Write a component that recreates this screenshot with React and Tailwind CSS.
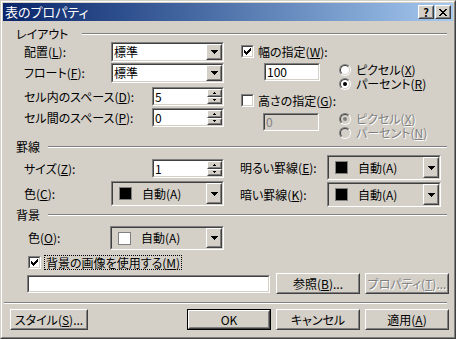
const FONT = "font-['Noto_Sans_CJK_JP','Noto_Sans',sans-serif] [font-feature-settings:'palt']";

function U({ children }) {
  return <span className="underline underline-offset-1">{children}</span>;
}

function Sunken({ className = "", innerClass = "", children }) {
  return (
    <div className={`border border-t-[#808080] border-l-[#808080] border-b-white border-r-white ${className}`}>
      <div className={`h-full w-full border border-t-[#404040] border-l-[#404040] border-b-[#d4d0c8] border-r-[#d4d0c8] ${innerClass}`}>
        {children}
      </div>
    </div>
  );
}

function Raised({ className = "", innerClass = "", children }) {
  return (
    <div className={`border border-t-white border-l-white border-b-[#404040] border-r-[#404040] ${className}`}>
      <div className={`h-full w-full border border-t-[#d4d0c8] border-l-[#d4d0c8] border-b-[#808080] border-r-[#808080] ${innerClass}`}>
        {children}
      </div>
    </div>
  );
}

function DownArrow() {
  return (
    <svg width="7" height="4" viewBox="0 0 7 4" shapeRendering="crispEdges">
      <path d="M0 0h7v1H0zM1 1h5v1H1zM2 2h3v1H2zM3 3h1v1H3z" fill="#000" />
    </svg>
  );
}

function Combo({ className = "", fieldClass = "bg-white", children }) {
  return (
    <Sunken className={className} innerClass={`flex ${fieldClass}`}>
      <div className="flex min-w-0 flex-1 items-center">{children}</div>
      <Raised className="h-full w-[16px] bg-[#d4d0c8]" innerClass="flex items-center justify-center">
        <DownArrow />
      </Raised>
    </Sunken>
  );
}

function Spin({ value }) {
  return (
    <Sunken className="h-[19px] w-[72px]" innerClass="flex bg-white">
      <div className="flex flex-1 items-center pl-[1px] leading-none">{value}</div>
      <div className="flex w-[15px] flex-col">
        {[0, 1].map((i) => (
          <Raised key={i} className="flex-1 bg-[#d4d0c8]" innerClass="flex items-center justify-center">
            <svg width="3" height="2" viewBox="0 0 3 2" shapeRendering="crispEdges">
              <path d={i === 0 ? "M1 0h1v1h1v1H0V1h1z" : "M0 0h3v1H2v1H1V1H0z"} fill="#000" />
            </svg>
          </Raised>
        ))}
      </div>
    </Sunken>
  );
}

function Check({ checked }) {
  return (
    <Sunken className="h-[13px] w-[13px] shrink-0" innerClass="flex items-center justify-center bg-white">
      {checked && (
        <svg width="7" height="7" viewBox="0 0 7 7" shapeRendering="crispEdges">
          <path
            d="M0 2h1v3H0zM1 3h1v3H1zM2 4h1v3H2zM3 3h1v3H3zM4 2h1v3H4zM5 1h1v3H5zM6 0h1v3H6z"
            fill="#000"
          />
        </svg>
      )}
    </Sunken>
  );
}

function Radio({ checked, disabled, children }) {
  return (
    <div className="flex h-[13px] items-center leading-[13px]">
      <div className="h-[12px] w-[12px] shrink-0 rounded-full border border-t-[#808080] border-l-[#808080] border-b-white border-r-white">
        <div
          className={`flex h-full w-full items-center justify-center rounded-full border border-t-[#404040] border-l-[#404040] border-b-[#d4d0c8] border-r-[#d4d0c8] ${
            disabled ? "bg-[#d4d0c8]" : "bg-white"
          }`}
        >
          {checked && (
            <div className={`h-[4px] w-[4px] rounded-full ${disabled ? "bg-[#808080]" : "bg-black"}`} />
          )}
        </div>
      </div>
      <span className={`ml-[5px] ${disabled ? "text-[#808080] [text-shadow:1px_1px_0_#fff]" : ""}`}>{children}</span>
    </div>
  );
}

function Header({ label, w }) {
  return (
    <div className="ml-[13px] mr-[6px] flex h-[14px] items-center">
      <span className={`shrink-0 ${w}`}>{label}</span>
      <div className="h-[2px] flex-1 border-t border-t-[#808080] border-b border-b-white" />
    </div>
  );
}

function ColorCombo({ className, swatch }) {
  return (
    <Combo className={className} fieldClass="bg-[#d4d0c8]">
      <div className={`ml-[6px] h-[13px] w-[13px] border border-[#808080] ${swatch}`} />
      <span className="ml-[10px]">自動(A)</span>
    </Combo>
  );
}

function Button({ className = "", disabled, children }) {
  return (
    <Raised className={`h-[21px] bg-[#d4d0c8] ${className}`} innerClass="flex items-center justify-center">
      <span className={disabled ? "text-[#808080] [text-shadow:1px_1px_0_#fff]" : ""}>{children}</span>
    </Raised>
  );
}

export default function App() {
  return (
    <div className={`${FONT} h-[339px] w-[456px] text-[12px] leading-[14px] text-black`}>
      <div className="flex h-full w-full flex-col border border-t-[#d4d0c8] border-l-[#d4d0c8] border-b-[#404040] border-r-[#404040] bg-[#d4d0c8]">
        <div className="flex h-full flex-col border border-t-white border-l-white border-b-[#808080] border-r-[#808080] p-px">
          {/* title bar */}
          <div className="flex h-[18px] shrink-0 items-center bg-linear-to-r from-[#0a246a] to-[#a6caf0] pl-[2px] pr-[2px]">
            <span className="flex-1 text-[13px] text-white">表のプロパティ</span>
            <Raised className="h-[14px] w-[16px] bg-[#d4d0c8]" innerClass="flex items-center justify-center">
              <span className="text-[11px] font-bold leading-none">?</span>
            </Raised>
            <Raised className="ml-[1px] h-[14px] w-[16px] bg-[#d4d0c8]" innerClass="flex items-center justify-center">
              <svg width="8" height="7" viewBox="0 0 8 7" shapeRendering="crispEdges">
                <path
                  d="M0 0h2v1H0zM6 0h2v1H6zM1 1h2v1H1zM5 1h2v1H5zM2 2h4v1H2zM3 3h2v1H3zM2 4h4v1H2zM1 5h2v1H1zM5 5h2v1H5zM0 6h2v1H0zM6 6h2v1H6z"
                  fill="#000"
                />
              </svg>
            </Raised>
          </div>

          {/* レイアウト */}
          <div className="mt-[6px]">
            <Header label="レイアウト" w="w-[66px]" />
          </div>
          <div className="mt-[1px] flex">
            <div className="ml-[21px] flex w-[200px] flex-col">
              <div className="flex h-[20px] items-center">
                <span className="w-[87px]">配置(<U>L</U>):</span>
                <Combo className="h-[20px] w-[113px]">
                  <span className="pl-[1px]">標準</span>
                </Combo>
              </div>
              <div className="mt-[1px] flex h-[20px] items-center">
                <span className="w-[87px]">フロート(<U>F</U>):</span>
                <Combo className="h-[20px] w-[113px]">
                  <span className="pl-[1px]">標準</span>
                </Combo>
              </div>
              <div className="mt-[4px] flex h-[19px] items-center">
                <span className="w-[128px]">セル内のスペース(<U>D</U>):</span>
                <Spin value="5" />
              </div>
              <div className="mt-[2px] flex h-[19px] items-center">
                <span className="w-[128px]">セル間のスペース(<U>P</U>):</span>
                <Spin value="0" />
              </div>
            </div>
            <div className="ml-[17px] flex flex-1 flex-col">
              <div className="mt-[3px] flex h-[13px] items-center">
                <Check checked />
                <span className="ml-[4px]">幅の指定(<U>W</U>):</span>
              </div>
              <div className="mt-[5px] flex">
                <Sunken className="ml-[23px] h-[18px] w-[56px]" innerClass="flex items-center bg-white pl-[1px]">
                  100
                </Sunken>
                <div className="ml-[19px] flex flex-col gap-[1px]">
                  <Radio>ピクセル(<U>X</U>)</Radio>
                  <Radio checked>パーセント(<U>R</U>)</Radio>
                </div>
              </div>
              <div className="mt-[4px] flex h-[13px] items-center">
                <Check />
                <span className="ml-[4px]">高さの指定(<U>G</U>):</span>
              </div>
              <div className="mt-[5px] flex">
                <Sunken
                  className="ml-[22px] mt-[1px] h-[18px] w-[56px]"
                  innerClass="flex items-center bg-[#d4d0c8] pl-[1px] text-[#808080]"
                >
                  0
                </Sunken>
                <div className="ml-[20px] flex flex-col gap-[1px]">
                  <Radio checked disabled>
                    ピクセル(<U>X</U>)
                  </Radio>
                  <Radio disabled>
                    パーセント(<U>N</U>)
                  </Radio>
                </div>
              </div>
            </div>
          </div>

          {/* 罫線 */}
          <div className="mt-[1px]">
            <Header label="罫線" w="w-[32px]" />
          </div>
          <div className="flex">
            <div className="ml-[21px] flex w-[200px] flex-col">
              <div className="mt-[5px] flex h-[19px] items-center">
                <span className="w-[128px]">サイズ(<U>Z</U>):</span>
                <Spin value="1" />
              </div>
              <div className="mt-[3px] flex h-[25px] items-center">
                <span className="w-[87px]">色(<U>C</U>):</span>
                <ColorCombo className="h-[25px] w-[113px]" swatch="bg-black" />
              </div>
            </div>
            <div className="ml-[16px] flex flex-col">
              <div className="mt-[1px] flex h-[25px] items-center">
                <span className="w-[87px]">明るい罫線(<U>E</U>):</span>
                <ColorCombo className="h-[25px] w-[114px]" swatch="bg-black" />
              </div>
              <div className="mt-[2px] flex h-[25px] items-center">
                <span className="w-[87px]">暗い罫線(<U>K</U>):</span>
                <ColorCombo className="h-[25px] w-[114px]" swatch="bg-black" />
              </div>
            </div>
          </div>

          {/* 背景 */}
          <div className="mt-[1px]">
            <Header label="背景" w="w-[32px]" />
          </div>
          <div className="ml-[25px] mt-[4px] flex h-[24px] items-center">
            <span className="w-[82px]">色(<U>O</U>):</span>
            <ColorCombo className="h-[24px] w-[114px]" swatch="bg-white" />
          </div>
          <div className="ml-[25px] mt-[4px] flex h-[16px] items-center">
            <Check checked />
            <span className="ml-[3px] border border-dotted border-black px-px leading-[13px]">
              背景の画像を使用する(<U>M</U>)
            </span>
          </div>
          <div className="ml-[24px] mt-[3px] flex h-[21px] items-center">
            <Sunken className="h-[18px] w-[243px]" innerClass="bg-white" />
            <Button className="ml-[6px] w-[84px]">
              参照(<U>B</U>)...
            </Button>
            <Button className="ml-[5px] w-[84px]" disabled>
              プロパティ(<U>T</U>)...
            </Button>
          </div>

          <div className="ml-[1px] mr-[6px] mt-[8px] h-[2px] border-t border-t-[#808080] border-b border-b-white" />

          <div className="mt-[5px] flex h-[21px]">
            <Button className="ml-[7px] w-[78px]">
              スタイル(<U>S</U>)...
            </Button>
            <div className="ml-[99px] h-[21px] w-[84px] border border-black">
              <Raised className="h-full w-full bg-[#d4d0c8]" innerClass="flex items-center justify-center">
                OK
              </Raised>
            </div>
            <Button className="ml-[5px] w-[84px]">キャンセル</Button>
            <Button className="ml-[5px] w-[84px]">
              適用(<U>A</U>)
            </Button>
          </div>
        </div>
      </div>
    </div>
  );
}
